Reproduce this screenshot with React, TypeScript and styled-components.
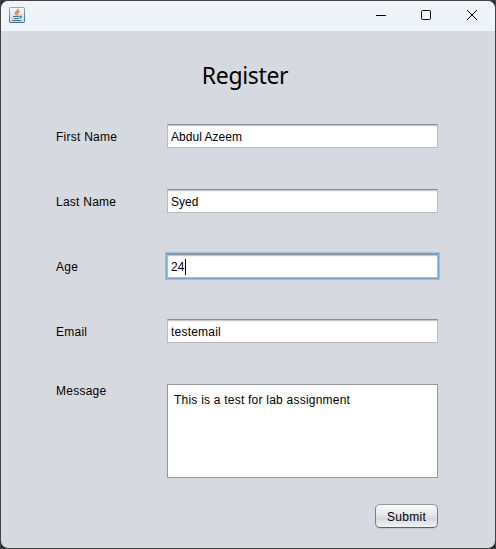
import React from 'react';
import styled, { createGlobalStyle } from 'styled-components';

const GlobalStyle = createGlobalStyle`
  * { box-sizing: border-box; }
  body { margin: 0; background: #38373b; overflow: hidden; }
`;

const Window = styled.div`
  width: 496px;
  height: 549px;
  border: 1px solid #434247;
  background: #252429;
  color: #000;
  font: 12px/16px 'Liberation Sans', Arial, sans-serif;
`;

const Frame = styled.div`
  height: 547px;
  border-radius: 7px;
  overflow: hidden;
  background: #d6d9df;
`;

const TitleBar = styled.header`
  display: flex;
  justify-content: space-between;
  height: 30px;
  padding-left: 8px;
  background: #eff4f9;
`;

const AppIcon = styled.svg`
  width: 16px;
  height: 16px;
  margin-top: 6px;
`;

const Controls = styled.div`
  display: flex;
`;

const ControlButton = styled.button<{ $width?: number }>`
  width: ${(p) => p.$width ?? 46}px;
  height: 28px;
  padding: 0;
  border: 0;
  background: none;
  display: flex;
  align-items: center;
  justify-content: center;
`;

const Heading = styled.h1`
  margin: 27px 0 0;
  padding-right: 6px;
  height: 34px;
  text-align: center;
  font: 400 23px/34px 'Noto Sans', 'Open Sans', sans-serif;
  letter-spacing: -0.35px;
`;

const Form = styled.form`
  width: 382px;
  margin: 32px 0 0 55px;
  display: flex;
  flex-direction: column;
`;

const Row = styled.div<{ $last?: boolean }>`
  display: flex;
  height: ${(p) => (p.$last ? 94 : 24)}px;
  margin-bottom: ${(p) => (p.$last ? 26 : 41)}px;
`;

const Label = styled.label<{ $raised?: boolean }>`
  width: 111px;
  padding-top: ${(p) => (p.$raised ? 0 : 5)}px;
  margin-top: ${(p) => (p.$raised ? -1 : 0)}px;
  letter-spacing: 0.25px;
`;

const Field = styled.div<{ $focused?: boolean; $spacing?: number }>`
  display: flex;
  align-items: center;
  width: 271px;
  height: 24px;
  padding: 1px 0 0 3px;
  border: 1px solid #b9babd;
  border-top-color: #8d8e91;
  background: linear-gradient(#c9cacc 0 1px, #f3f3f4 1px 2px, #fff 2px);
  letter-spacing: ${(p) => p.$spacing ?? 0.2}px;
  ${(p) => p.$focused && 'box-shadow: 0 0 0 1px #73a4d1, 0 0 0 2px #a3bfdb;'}
`;

const Caret = styled.span`
  width: 1px;
  height: 16px;
  background: #000;
`;

const MessageArea = styled.div`
  width: 271px;
  height: 94px;
  padding: 7px 6px;
  border: 1px solid #9297a1;
  background: #fff;
  letter-spacing: 0.225px;
`;

const SubmitButton = styled.button`
  align-self: flex-end;
  width: 63px;
  height: 24px;
  padding: 1px 0 0;
  border: 1px solid #7b7e85;
  border-top-color: #95989e;
  border-bottom-color: #5d6066;
  border-radius: 5px;
  background: linear-gradient(#fafafb, #e5e7eb 45%, #d6d9df 60%, #f0f2f6);
  box-shadow: 0 1px 0 #c3c6cc;
  color: #000;
  font: inherit;
  letter-spacing: 0.27px;
`;

const JavaIcon = () => (
  <AppIcon viewBox="0 0 16 16" fill="none">
    <defs>
      <linearGradient id="tile" x1="0" y1="0" x2="0" y2="1">
        <stop offset="0" stopColor="#f5f7f9" />
        <stop offset="1" stopColor="#ccd7e0" />
      </linearGradient>
      <linearGradient id="edge" x1="0" y1="0" x2="0" y2="1">
        <stop offset="0" stopColor="#8eaabd" />
        <stop offset="1" stopColor="#426c8b" />
      </linearGradient>
    </defs>
    <rect x=".5" y=".5" width="15" height="15" rx=".7" fill="url(#tile)" stroke="url(#edge)" />
    <path d="M9.2 2C9.8 4 6.2 4.6 6.4 6.4c.1.8.8 1.2 1 2M10.6 4.3C9 5 8.1 5.5 8.4 6.4c.3.7.5 1.1-.3 1.8" stroke="#e2792b" strokeWidth="1.4" />
    <path d="M4 9.5h6.5M5 11.5h5M3.5 13.5h8.5M10.7 9.3c2.5-.8 2.3 1.6.1 2" stroke="#48738f" strokeWidth="1.1" />
  </AppIcon>
);

const fields = [
  { label: 'First Name', value: 'Abdul Azeem', spacing: 0.03 },
  { label: 'Last Name', value: 'Syed', spacing: 0.05 },
  { label: 'Age', value: '24', focused: true },
  { label: 'Email', value: 'testemail', spacing: 0.22 },
];

export default function App() {
  return (
    <>
      <GlobalStyle />
      <Window>
        <Frame>
          <TitleBar>
            <JavaIcon />
            <Controls>
              <ControlButton aria-label="Minimize" $width={44}>
                <svg width="12" height="12" stroke="#000"><path d="M1 6.5h10" /></svg>
              </ControlButton>
              <ControlButton aria-label="Maximize">
                <svg width="12" height="12" fill="none" stroke="#000"><rect x="1.5" y="1.5" width="9" height="9" rx="1" /></svg>
              </ControlButton>
              <ControlButton aria-label="Close">
                <svg width="12" height="12" stroke="#000"><path d="m1 1 10 10M11 1 1 11" /></svg>
              </ControlButton>
            </Controls>
          </TitleBar>
          <Heading>Register</Heading>
          <Form>
            {fields.map((f) => (
              <Row key={f.label}>
                <Label>{f.label}</Label>
                <Field $focused={f.focused} $spacing={f.spacing}>
                  {f.value}
                  {f.focused && <Caret />}
                </Field>
              </Row>
            ))}
            <Row $last>
              <Label $raised>Message</Label>
              <MessageArea>This is a test for lab assignment</MessageArea>
            </Row>
            <SubmitButton type="button">Submit</SubmitButton>
          </Form>
        </Frame>
      </Window>
    </>
  );
}
